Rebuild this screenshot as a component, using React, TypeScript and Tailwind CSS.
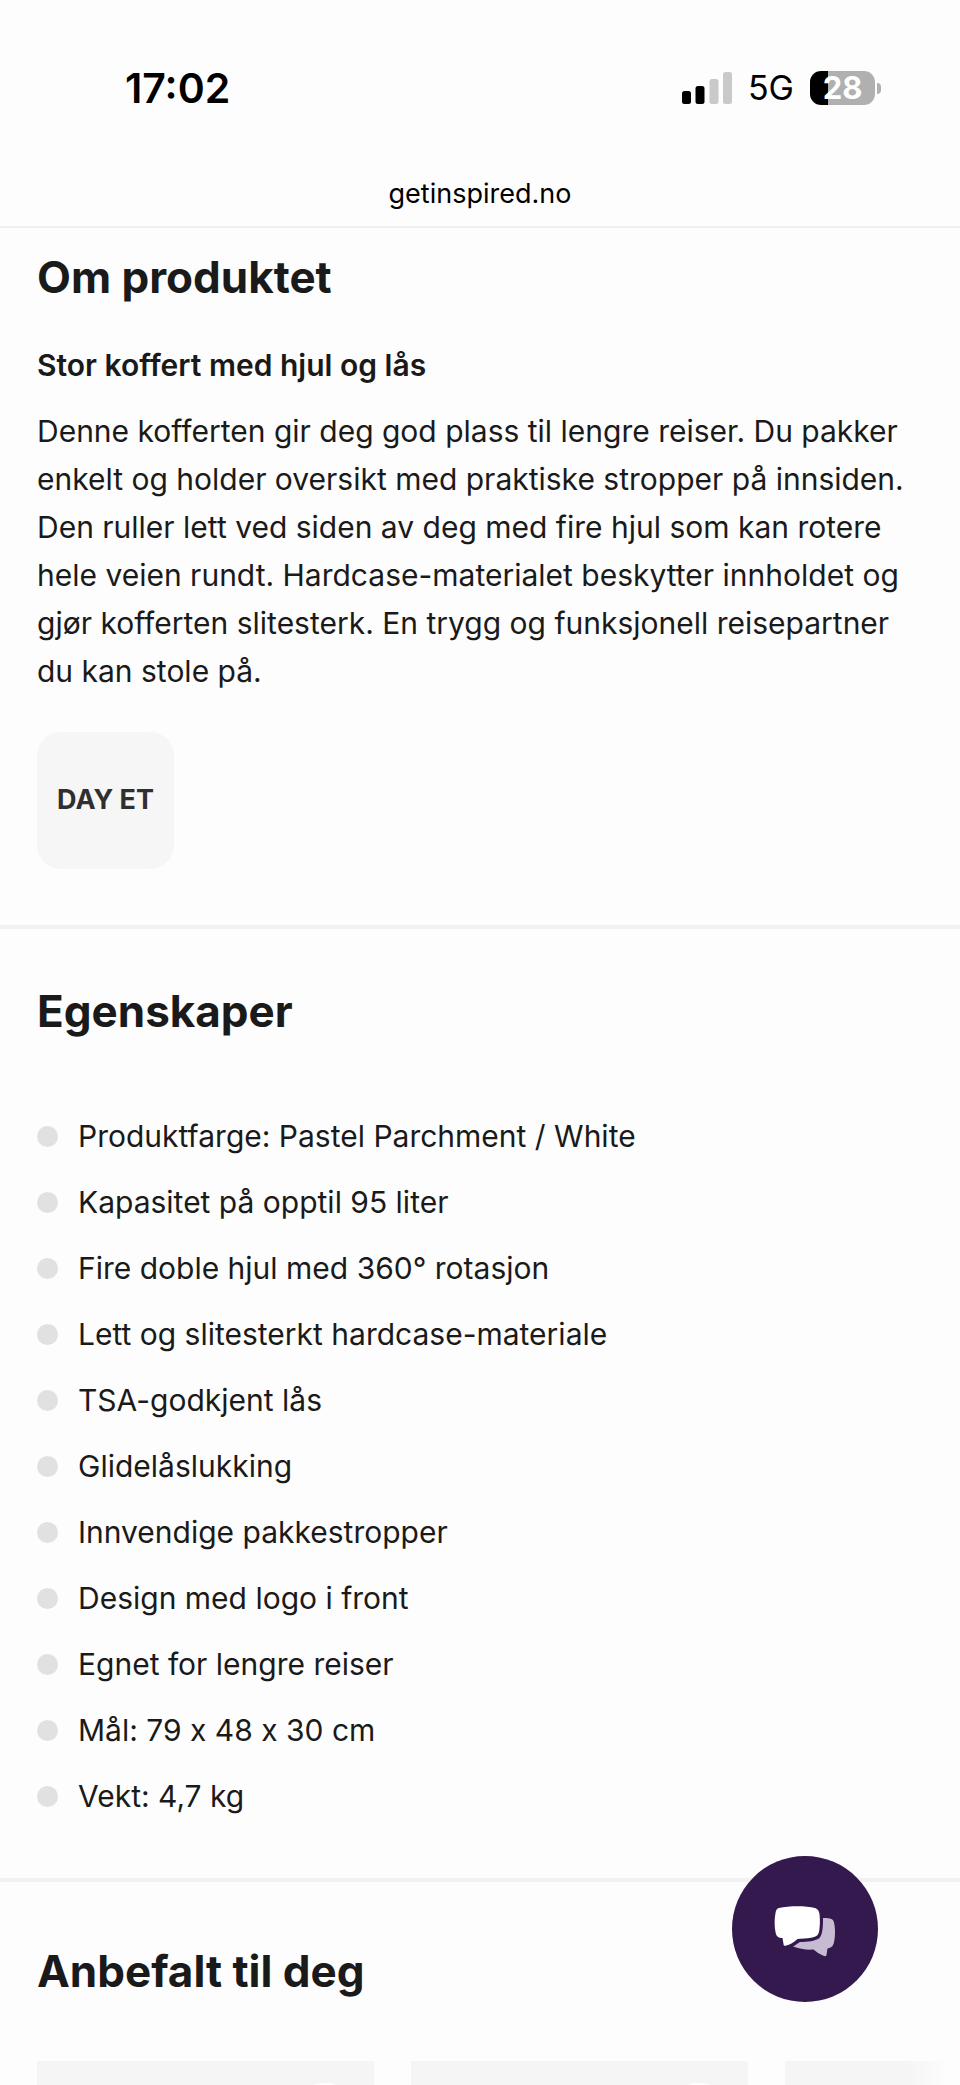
import React from 'react';

const FEATURES = [
  'Produktfarge: Pastel Parchment / White',
  'Kapasitet på opptil 95 liter',
  'Fire doble hjul med 360° rotasjon',
  'Lett og slitesterkt hardcase-materiale',
  'TSA-godkjent lås',
  'Glidelåslukking',
  'Innvendige pakkestropper',
  'Design med logo i front',
  'Egnet for lengre reiser',
  'Mål: 79 x 48 x 30 cm',
  'Vekt: 4,7 kg',
];

const PRODUCTS = [1, 2, 3];

const SignalIcon: React.FC = () => (
  <svg width="50" height="32" viewBox="0 0 50 32" aria-hidden="true">
    <rect x="0" y="19" width="9" height="13" rx="2.5" fill="#000" />
    <rect x="13.5" y="14" width="9" height="18" rx="2.5" fill="#000" />
    <rect x="27.5" y="7" width="9" height="25" rx="2.5" fill="#c9c9c9" />
    <rect x="41" y="0" width="9" height="32" rx="2.5" fill="#c9c9c9" />
  </svg>
);

const Battery: React.FC = () => (
  <div className="flex items-center gap-[2px]">
    <div className="flex h-[34px] w-[65px] items-center justify-center rounded-[11px] bg-linear-to-r from-black from-28% to-[#b0b0b0] to-28%">
      <span className="text-[31px] leading-[34px] font-bold text-white">28</span>
    </div>
    <div className="h-[11px] w-[4px] rounded-r-full bg-[#b0b0b0]" />
  </div>
);

const ChatIcon: React.FC = () => (
  <svg width="62" height="57" viewBox="0 -5 62 57" aria-hidden="true">
    <path
      d="M49 12 C54 12 58 12 59.500 15 C61.500 20 61.500 32 59.500 38 C58.500 41 56 42 53.500 42.500 L52.500 49 C52 50.500 50.500 50.500 49 49.500 C45.500 48 42.500 46 39.500 43.500 C33 44 25 43 19 40.500 C22 39 23 37.500 26 36 C34 36 41 35 45 32.500 C49 29 49 19 49 12 Z"
      fill="#c6bbd2"
    />
    <path
      d="M5 2 C15 -0.300 32 -0.300 41 2 C44 3 45 5 45.500 8 C46.200 14 46 21 45 26 C44 30 41 31 37 31.800 C33 32.500 27 33 23.500 33 C20 36 16 38.800 11.500 39.800 C10 40 9.700 39.500 9.500 38 L8.500 32 C5 32 2.500 31 1.700 27 C0.300 21 0.300 13 1.500 7 C2 4 3 2.500 5 2 Z"
      fill="#fff"
    />
  </svg>
);

const Heading: React.FC<{ children: React.ReactNode }> = ({ children }) => (
  <h2 className="text-[44px] leading-[56px] font-bold">{children}</h2>
);

const App: React.FC = () => {
  return (
    <div className="relative flex h-screen flex-col overflow-hidden bg-[#fdfdfd] font-['Inter',sans-serif] text-[#1a1a1a]">
      <header className="shrink-0 border-b-2 border-[#efefef] pb-[15px] text-black">
        <div className="flex h-44 items-center justify-between pr-[79px] pl-[125px]">
          <time className="text-[41px] leading-[48px] font-semibold">17:02</time>
          <div className="flex items-center gap-4">
            <SignalIcon />
            <span className="text-[34px] leading-[48px]">5G</span>
            <Battery />
          </div>
        </div>
        <p className="pt-px text-center text-[27px] leading-[34px]">getinspired.no</p>
      </header>

      <main className="flex-1">
        <section className="border-b-4 border-[#f1f1f3] px-[37px] pt-[21px] pb-14">
          <Heading>Om produktet</Heading>
          <h3 className="mt-9 text-[30px] leading-[48px] font-semibold">Stor koffert med hjul og lås</h3>
          <p className="mt-[18px] text-[30px] leading-[48px]">
            Denne kofferten gir deg god plass til lengre reiser. Du pakker enkelt og holder oversikt med praktiske
            stropper på innsiden. Den ruller lett ved siden av deg med fire hjul som kan rotere hele veien rundt.
            Hardcase-materialet beskytter innholdet og gjør kofferten slitesterk. En trygg og funksjonell reisepartner
            du kan stole på.
          </p>
          <a
            href="#day-et"
            className="mt-[37px] flex size-[137px] items-center justify-center rounded-3xl bg-[#f6f6f6] text-[27px] font-bold text-[#2f2f2f]"
          >
            DAY ET
          </a>
        </section>

        <section className="border-b-4 border-[#f1f1f3] px-[37px] pt-[54px] pb-[58px]">
          <Heading>Egenskaper</Heading>
          {/* calt turns the x in the measurements into a multiplication sign */}
          <ul className="mt-[73px] flex flex-col gap-[18px] [font-feature-settings:'calt'_0]">
            {FEATURES.map((feature) => (
              <li key={feature} className="flex items-center gap-5 text-[30px] leading-[48px]">
                <span className="size-[21px] shrink-0 rounded-full bg-[#e1e1e1]" />
                {feature}
              </li>
            ))}
          </ul>
        </section>

        <section className="relative pt-[61px] pl-[37px]">
          <Heading>Anbefalt til deg</Heading>
          <div className="mt-[62px] flex gap-[37px] overflow-hidden">
            {PRODUCTS.map((id) => (
              <article key={id} className="flex h-[450px] w-[337px] shrink-0 items-start justify-end bg-[#f5f5f5] px-3 pt-[22px]">
                <button type="button" aria-label="Legg til favoritter" className="size-[74px] rounded-full bg-white" />
              </article>
            ))}
          </div>
          {/* Fade at the edge of the carousel */}
          <div className="absolute right-0 bottom-0 h-[450px] w-[54px] bg-linear-to-r from-transparent to-[#fdfdfd] to-80%" />
        </section>
      </main>

      <button
        type="button"
        aria-label="Åpne chat"
        className="absolute right-[82px] bottom-[83px] flex size-[146px] items-center justify-center rounded-full bg-[#33194d]"
      >
        <ChatIcon />
      </button>
    </div>
  );
};

export default App;
